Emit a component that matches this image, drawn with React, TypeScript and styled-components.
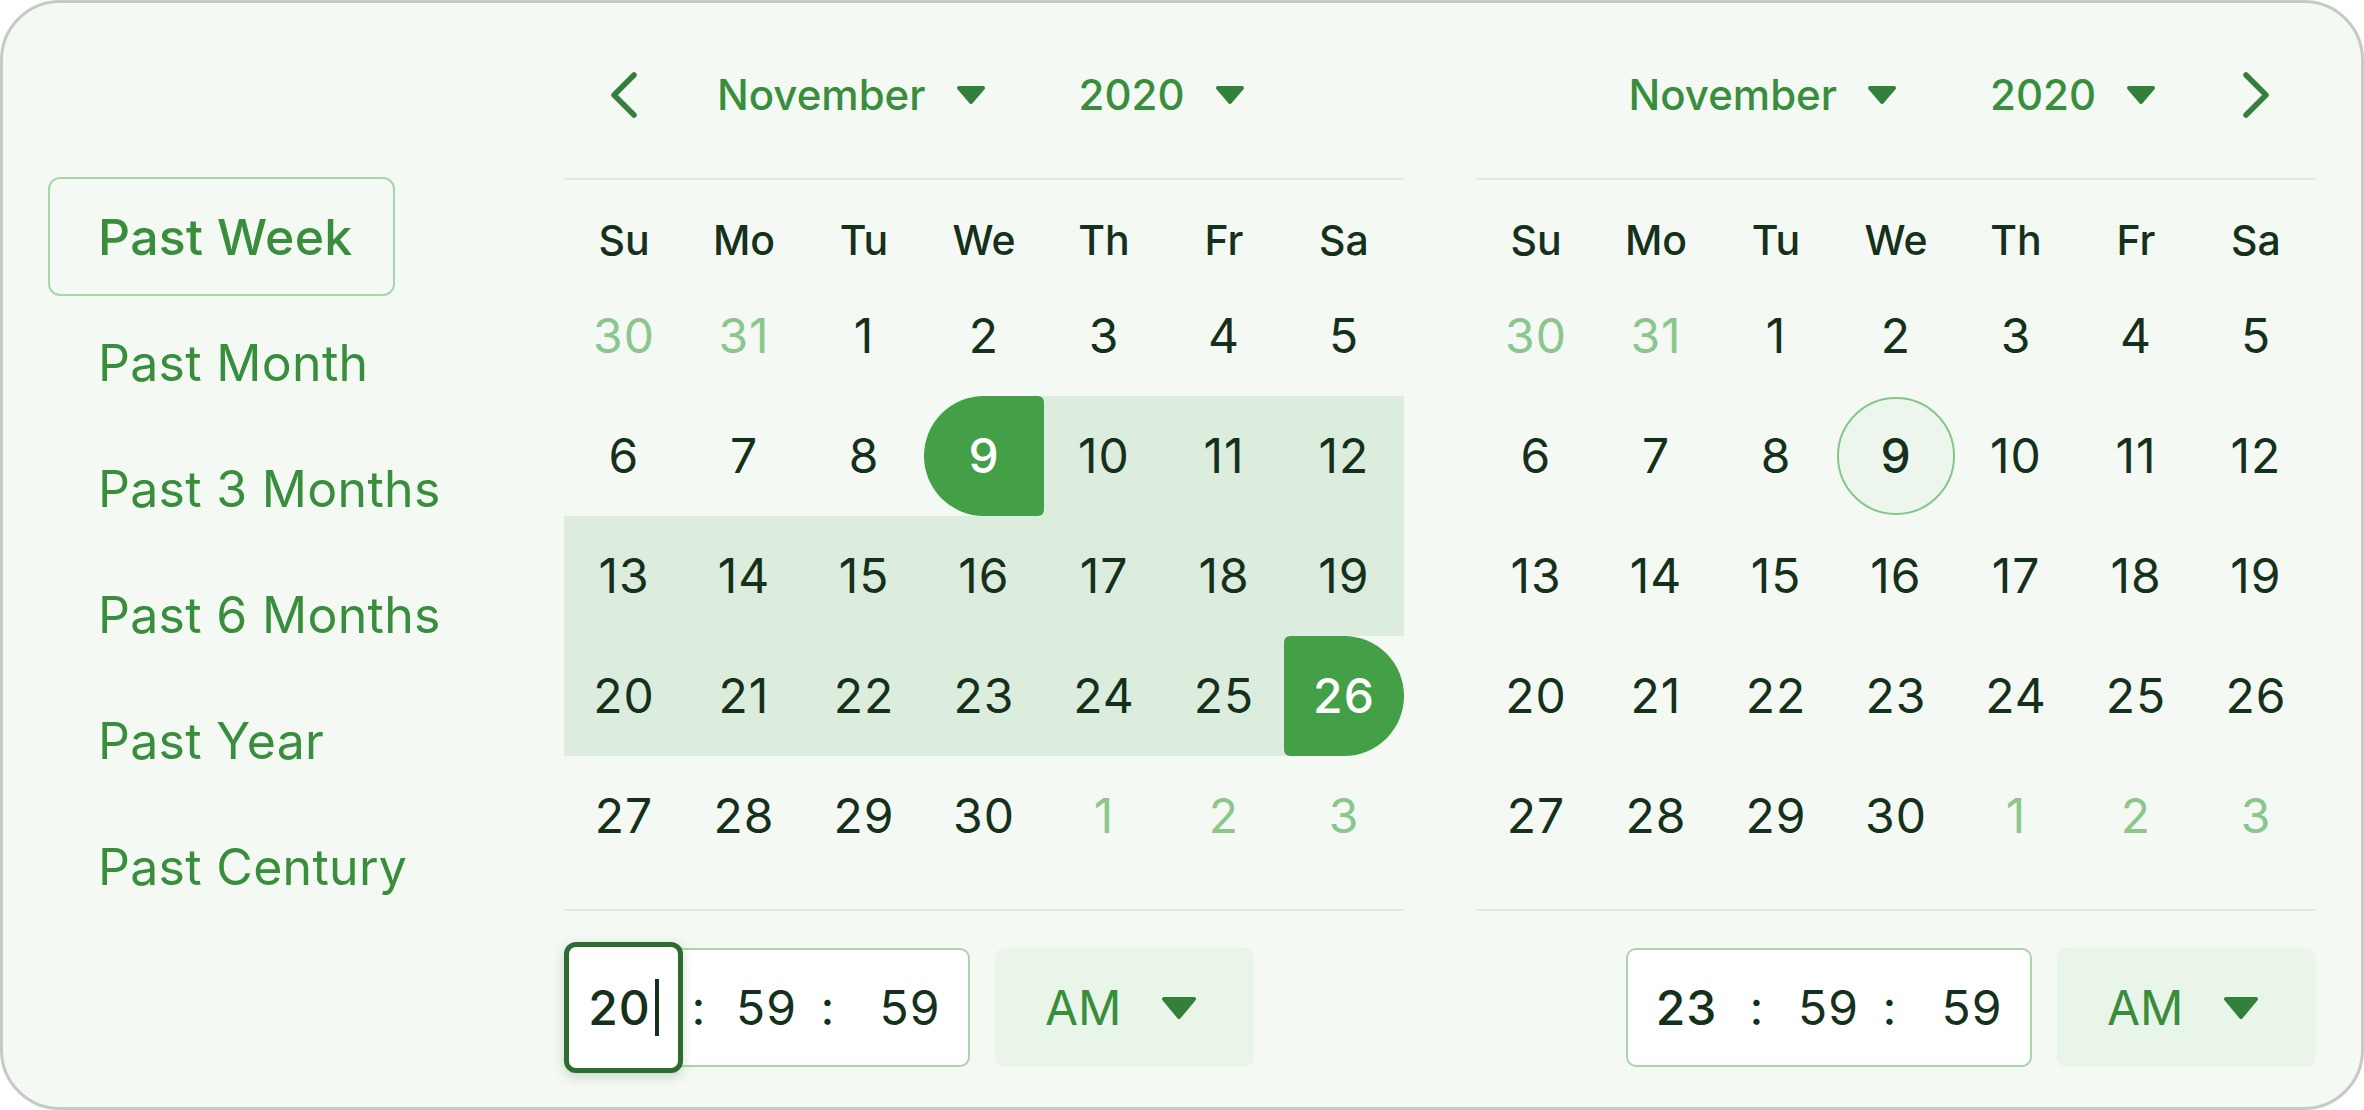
import React from 'react';
import styled, { createGlobalStyle, css } from 'styled-components';

const C = {
  page: '#ffffff',
  bg: '#f4f9f3',
  frame: '#c5cac4',
  green: '#388e3c',
  greenDark: '#33803a',
  fill: '#43a047',
  band: '#dcedde',
  muted: '#8bc78d',
  ink: '#15301b',
  divider: '#dcecdc',
  soft: '#a8d5a9',
  focus: '#2e6b30',
  todayRing: '#86c689',
  todayFill: '#ecf6ec',
  chip: '#eaf5e9',
};

const FONT = `Inter, "Noto Sans", "Liberation Sans", sans-serif`;

const GlobalStyle = createGlobalStyle`
  html, body {
    margin: 0;
    padding: 0;
    background: ${C.page};
    font-family: ${FONT};
  }
  * { box-sizing: border-box; }
  button { font-family: ${FONT}; cursor: pointer; }
`;

const Card = styled.div`
  width: 100vw;
  height: 100vh;
  background: ${C.bg};
  border: 3px solid ${C.frame};
  border-radius: 60px;
  padding: 42px 45px 0;
  display: flex;
  align-items: flex-start;
  overflow: hidden;
`;

const Menu = styled.nav`
  width: 347px;
  margin-top: 132px;
  margin-right: 169px;
  display: flex;
  flex-direction: column;
  gap: 7px;
  flex-shrink: 0;
`;

const MenuItem = styled.button<{ $active?: boolean }>`
  height: 119px;
  padding: 0 0 0 48px;
  text-align: left;
  white-space: nowrap;
  background: transparent;
  border: 2px solid ${p => (p.$active ? C.soft : 'transparent')};
  border-radius: 12px;
  font-size: 50px;
  font-weight: ${p => (p.$active ? 500 : 400)};
  line-height: 1;
  letter-spacing: 0.3px;
  color: ${C.green};
`;

const Calendars = styled.div`
  display: flex;
  gap: 72px;
`;

const Pane = styled.section`
  width: 840px;
  display: flex;
  flex-direction: column;
  & > * { flex-shrink: 0; }
`;

const Header = styled.div<{ $side: 'left' | 'right' }>`
  height: 100px;
  margin-bottom: 33px;
  display: flex;
  align-items: center;
  justify-content: ${p => (p.$side === 'left' ? 'flex-start' : 'flex-end')};
`;

const NavButton = styled.button<{ $side: 'left' | 'right' }>`
  width: 120px;
  height: 100px;
  padding: 0;
  border: 0;
  background: none;
  display: flex;
  align-items: center;
  justify-content: center;
  color: ${C.greenDark};
  order: ${p => (p.$side === 'left' ? 0 : 2)};
  margin: ${p => (p.$side === 'left' ? '0 33px 0 0' : '0 0 0 40px')};
`;

const Selects = styled.div`
  display: flex;
  align-items: center;
  gap: 93px;
  order: 1;
`;

const Select = styled.button`
  display: flex;
  align-items: center;
  gap: 30px;
  padding: 0;
  border: 0;
  background: none;
  font-size: 42px;
  font-weight: 500;
  line-height: 1;
  color: ${C.green};
`;

const Divider = styled.div<{ $gapTop?: number }>`
  height: 2px;
  background: ${C.divider};
  margin-top: ${p => p.$gapTop ?? 0}px;
`;

const Weekdays = styled.div`
  display: grid;
  grid-template-columns: repeat(7, 120px);
  height: 76px;
  margin-top: 22px;
  align-items: center;
  justify-items: center;
  font-size: 41px;
  font-weight: 500;
  color: ${C.ink};
`;

const Days = styled.div`
  display: grid;
  grid-template-columns: repeat(7, 120px);
  grid-auto-rows: 120px;
  margin-top: -2px;
`;

type Band = 'none' | 'full' | 'right' | 'left';

const DayCell = styled.div<{ $band: Band }>`
  display: flex;
  align-items: center;
  justify-content: center;
  ${p =>
    p.$band === 'full' &&
    css`
      background: ${C.band};
    `}
  ${p =>
    p.$band === 'right' &&
    css`
      background: linear-gradient(90deg, transparent 50%, ${C.band} 50%);
    `}
  ${p =>
    p.$band === 'left' &&
    css`
      background: linear-gradient(90deg, ${C.band} 50%, transparent 50%);
    `}
`;

type Mark = 'plain' | 'muted' | 'start' | 'end' | 'today';

const DayMark = styled.div<{ $mark: Mark }>`
  width: 100%;
  height: 100%;
  display: flex;
  align-items: center;
  justify-content: center;
  font-size: 48px;
  line-height: 1;
  letter-spacing: 1px;
  color: ${p => (p.$mark === 'muted' ? C.muted : C.ink)};

  ${p =>
    (p.$mark === 'start' || p.$mark === 'end') &&
    css`
      background: ${C.fill};
      color: #ffffff;
      font-weight: 500;
      border-radius: ${p.$mark === 'start' ? '60px 6px 6px 60px' : '6px 60px 60px 6px'};
    `}

  ${p =>
    p.$mark === 'today' &&
    css`
      width: 118px;
      height: 118px;
      border-radius: 50%;
      border: 2.5px solid ${C.todayRing};
      background: ${C.todayFill};
      font-weight: 500;
    `}
`;

const TimeRow = styled.div<{ $side: 'left' | 'right' }>`
  height: 119px;
  margin-top: 37px;
  display: flex;
  gap: 25px;
  justify-content: ${p => (p.$side === 'left' ? 'flex-start' : 'flex-end')};
`;

const TimeBox = styled.div`
  width: 406px;
  height: 119px;
  background: #ffffff;
  border: 2px solid ${C.soft};
  border-radius: 10px;
  display: grid;
  grid-template-columns: 117px 24px 109px 24px 128px;
  align-items: center;
  font-size: 48px;
  line-height: 1;
  letter-spacing: 1px;
  color: ${C.ink};
`;

const HourSeg = styled.div<{ $focused?: boolean }>`
  display: flex;
  align-items: center;
  justify-content: center;
  font-weight: 500;
  align-self: stretch;
  ${p =>
    p.$focused &&
    css`
      margin: -8px 0 -8px -2px;
      background: #ffffff;
      border: 5px solid ${C.focus};
      border-radius: 12px;
      box-shadow: 0 4px 12px rgba(46, 107, 48, 0.22);
      position: relative;
      z-index: 1;
    `}
`;

const Caret = styled.span`
  width: 4px;
  height: 57px;
  margin-left: 4px;
  background: ${C.ink};
`;

const Colon = styled.span<{ $shift?: boolean }>`
  text-align: center;
  transform: translateX(${p => (p.$shift ? 4 : 0)}px);
`;

const Seg = styled.span<{ $pad: number }>`
  text-align: center;
  padding-left: ${p => p.$pad}px;
`;

const Meridiem = styled.button`
  width: 259px;
  height: 119px;
  border: 0;
  border-radius: 10px;
  background: ${C.chip};
  display: flex;
  align-items: center;
  padding: 0 0 0 50px;
  gap: 40px;
  font-size: 48px;
  line-height: 1;
  color: ${C.green};
`;

const Chevron = ({ dir }: { dir: 'left' | 'right' }) => (
  <svg width="28" height="46" viewBox="0 0 28 46" fill="none">
    <polyline
      points={dir === 'left' ? '24,3 4,23 24,43' : '4,3 24,23 4,43'}
      stroke="currentColor"
      strokeWidth="5.5"
      strokeLinecap="round"
      strokeLinejoin="round"
    />
  </svg>
);

const Caret3 = ({ w = 30, h = 20 }: { w?: number; h?: number }) => (
  <svg width={w} height={h} viewBox={`0 0 ${w} ${h}`}>
    <path
      d={`M3 3 H${w - 3} L${w / 2} ${h - 3} Z`}
      fill={C.greenDark}
      stroke={C.greenDark}
      strokeWidth="4"
      strokeLinejoin="round"
    />
  </svg>
);

const WEEK = ['Su', 'Mo', 'Tu', 'We', 'Th', 'Fr', 'Sa'];
const PRESETS = ['Past Week', 'Past Month', 'Past 3 Months', 'Past 6 Months', 'Past Year', 'Past Century'];

type Day = { n: number; inMonth: boolean };
const DAYS: Day[] = [
  { n: 30, inMonth: false },
  { n: 31, inMonth: false },
  ...Array.from({ length: 30 }, (_, i) => ({ n: i + 1, inMonth: true })),
  { n: 1, inMonth: false },
  { n: 2, inMonth: false },
  { n: 3, inMonth: false },
];

interface MonthProps {
  side: 'left' | 'right';
  range?: [number, number];
  today?: number;
  hour: string;
  focused?: boolean;
}

const Month = ({ side, range, today, hour, focused }: MonthProps) => (
  <Pane>
    <Header $side={side}>
      <NavButton $side={side}>
        <Chevron dir={side} />
      </NavButton>
      <Selects>
        <Select>
          November <Caret3 />
        </Select>
        <Select>
          2020 <Caret3 />
        </Select>
      </Selects>
    </Header>
    <Divider />
    <Weekdays>
      {WEEK.map(w => (
        <span key={w}>{w}</span>
      ))}
    </Weekdays>
    <Days>
      {DAYS.map((d, i) => {
        let band: Band = 'none';
        let mark: Mark = d.inMonth ? 'plain' : 'muted';
        if (d.inMonth && range) {
          const [a, b] = range;
          if (d.n === a) {
            mark = 'start';
            band = i % 7 === 6 ? 'none' : 'right';
          } else if (d.n === b) {
            mark = 'end';
            band = i % 7 === 0 ? 'none' : 'left';
          } else if (d.n > a && d.n < b) band = 'full';
        }
        if (d.inMonth && today === d.n) mark = 'today';
        return (
          <DayCell key={i} $band={band}>
            <DayMark $mark={mark}>{d.n}</DayMark>
          </DayCell>
        );
      })}
    </Days>
    <Divider $gapTop={33} />
    <TimeRow $side={side}>
      <TimeBox>
        <HourSeg $focused={focused}>
          {hour}
          {focused && <Caret />}
        </HourSeg>
        <Colon $shift={focused}>:</Colon>
        <Seg $pad={10}>59</Seg>
        <Colon>:</Colon>
        <Seg $pad={12}>59</Seg>
      </TimeBox>
      <Meridiem>
        AM <Caret3 w={36} h={24} />
      </Meridiem>
    </TimeRow>
  </Pane>
);

export default function App() {
  return (
    <>
      <GlobalStyle />
      <Card>
        <Menu>
          {PRESETS.map((p, i) => (
            <MenuItem key={p} $active={i === 0}>
              {p}
            </MenuItem>
          ))}
        </Menu>
        <Calendars>
          <Month side="left" range={[9, 26]} hour="20" focused />
          <Month side="right" today={9} hour="23" />
        </Calendars>
      </Card>
    </>
  );
}
